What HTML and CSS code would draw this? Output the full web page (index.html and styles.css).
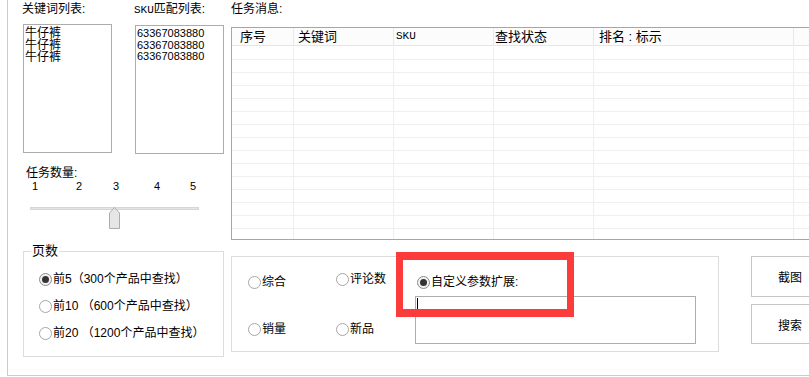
FILE: index.html
```html
<!DOCTYPE html>
<html lang="zh-CN">
<head>
    <meta charset="UTF-8">
    <title>排名查找</title>
    <link rel="stylesheet" href="styles.css">
</head>
<body>
    <div class="window">
        <div class="left-panel">
            <div class="lists">
                <div class="list-col">
                    <p class="caption">关键词列表:</p>
                    <div class="listbox keywords">
                        <div>牛仔裤</div>
                        <div>牛仔裤</div>
                        <div>牛仔裤</div>
                    </div>
                </div>
                <div class="list-col">
                    <p class="caption"><span class="latin">SKU</span>匹配列表:</p>
                    <div class="listbox skus">
                        <div>63367083880</div>
                        <div>63367083880</div>
                        <div>63367083880</div>
                    </div>
                </div>
            </div>

            <div class="task-count">
                <p class="caption">任务数量:</p>
                <div class="ticks">
                    <span>1</span><span>2</span><span>3</span><span>4</span><span>5</span>
                </div>
                <div class="slider">
                    <div class="track"></div>
                    <svg class="thumb" width="11" height="22" viewBox="0 0 11 22">
                        <polygon points="0.5,6 5.5,0.5 10.5,6 10.5,21.5 0.5,21.5" fill="#e6e6e6" stroke="#acacac"/>
                    </svg>
                </div>
            </div>

            <div class="group pages">
                <span class="legend">页数</span>
                <label class="option"><span class="radio on"></span>前5（300个产品中查找）</label>
                <label class="option"><span class="radio"></span>前10 （600个产品中查找）</label>
                <label class="option"><span class="radio"></span>前20 （1200个产品中查找）</label>
            </div>
        </div>

        <div class="right-panel">
            <p class="caption">任务消息:</p>
            <div class="grid">
                <div class="grid-head">
                    <span>序号</span>
                    <span>关键词</span>
                    <span class="latin">SKU</span>
                    <span>查找状态</span>
                    <span>排名 : 标示</span>
                    <span></span>
                </div>
                <div class="grid-body">
                    <div class="row"><span></span><span></span><span></span><span></span><span></span><span></span></div>
                    <div class="row"><span></span><span></span><span></span><span></span><span></span><span></span></div>
                    <div class="row"><span></span><span></span><span></span><span></span><span></span><span></span></div>
                    <div class="row"><span></span><span></span><span></span><span></span><span></span><span></span></div>
                    <div class="row"><span></span><span></span><span></span><span></span><span></span><span></span></div>
                    <div class="row"><span></span><span></span><span></span><span></span><span></span><span></span></div>
                    <div class="row"><span></span><span></span><span></span><span></span><span></span><span></span></div>
                    <div class="row"><span></span><span></span><span></span><span></span><span></span><span></span></div>
                    <div class="row"><span></span><span></span><span></span><span></span><span></span><span></span></div>
                    <div class="row"><span></span><span></span><span></span><span></span><span></span><span></span></div>
                    <div class="row"><span></span><span></span><span></span><span></span><span></span><span></span></div>
                    <div class="row"><span></span><span></span><span></span><span></span><span></span><span></span></div>
                    <div class="row"><span></span><span></span><span></span><span></span><span></span><span></span></div>
                    <div class="row"><span></span><span></span><span></span><span></span><span></span><span></span></div>
                    <div class="row"><span></span><span></span><span></span><span></span><span></span><span></span></div>
                </div>
            </div>

            <div class="bottom">
                <div class="group sort">
                    <label class="option opt-all"><span class="radio"></span>综合</label>
                    <label class="option opt-review"><span class="radio"></span>评论数</label>
                    <label class="option opt-sales"><span class="radio"></span>销量</label>
                    <label class="option opt-new"><span class="radio"></span>新品</label>
                    <div class="custom">
                        <label class="option"><span class="radio on"></span>自定义参数扩展:</label>
                        <div class="textbox"><span class="caret"></span></div>
                    </div>
                    <div class="mark"></div>
                </div>
                <div class="buttons">
                    <button class="btn btn-shot">截图</button>
                    <button class="btn">搜索</button>
                </div>
            </div>
        </div>
    </div>
</body>
</html>
```

FILE: styles.css
```css
* {
    box-sizing: border-box;
}
body {
    margin: 0;
    overflow: hidden;
    background-color: #fff;
    color: #000;
    font: 12px "Liberation Sans", "Noto Sans CJK SC", sans-serif;
}
p {
    margin: 0;
}
.window {
    display: flex;
    width: 840px;
    height: 376px;
    margin-left: 7px;
    border-left: 1px solid #cbcbcb;
    border-bottom: 1px solid #cbcbcb;
}
.caption {
    padding-top: 2px;
    line-height: 14px;
    white-space: nowrap;
}
.latin {
    font-family: "Liberation Mono", monospace;
    font-size: 11px;
}

/* left side */
.left-panel {
    width: 216px;
    flex-shrink: 0;
    padding-left: 15px;
}
.lists {
    display: flex;
    gap: 23px;
}
.list-col > .caption {
    margin-left: -1px;
}
.listbox {
    width: 89px;
    height: 129px;
    margin-top: 8px;
    border: 1px solid #acacac;
    padding: 2px 1px;
    line-height: 11.67px;
}
.listbox.keywords {
    font-size: 12px;
    line-height: 12px;
    padding-top: 2px;
}
.listbox.skus {
    font-size: 11px;
}
.task-count {
    margin-top: 13px;
    padding-left: 3px;
}
.task-count > .caption {
    padding-top: 0;
    line-height: 13px;
}
.ticks {
    display: grid;
    grid-template-columns: 44px 37px 41px 36px auto;
    padding-left: 6px;
    font-size: 11px;
    line-height: 12px;
}
.slider {
    position: relative;
    width: 169px;
    height: 22px;
    margin: 15px 0 0 4px;
}
.track {
    margin-top: 11px;
    height: 3px;
    background-color: #e4e4e4;
    border: 1px solid #d6d6d6;
}
.thumb {
    position: absolute;
    left: 79px;
    top: 0;
}

/* group boxes and radios */
.group {
    position: relative;
    border: 1px solid #dcdcdc;
}
.legend {
    position: absolute;
    top: -8px;
    left: 7px;
    padding: 0 1px;
    background-color: #fff;
    font-size: 13px;
    line-height: 14px;
}
.option {
    display: flex;
    align-items: center;
    gap: 1px;
    height: 13px;
    line-height: 13px;
    white-space: nowrap;
}
.radio {
    position: relative;
    flex-shrink: 0;
    width: 13px;
    height: 13px;
    border: 1px solid #a6a6a6;
    border-radius: 50%;
    background-color: #fff;
}
.radio.on {
    border-color: #8c8c8c;
    background-color: #f2f2f2;
}
.radio.on::after {
    content: "";
    position: absolute;
    left: 2px;
    top: 2px;
    width: 7px;
    height: 7px;
    border-radius: 50%;
    background-color: #333;
}
.pages {
    width: 201px;
    height: 106px;
    margin-top: 22px;
    padding: 21px 0 0 15px;
}
.pages .option + .option {
    margin-top: 14px;
}

/* right side */
.right-panel {
    flex: 1;
    margin-left: 7px;
}
.grid {
    height: 213px;
    margin-top: 11px;
    border: 1px solid #a6a6a6;
    overflow: hidden;
}
.grid-head {
    display: flex;
    height: 18px;
    background-color: #fcfcfc;
    border-bottom: 1px solid #dde7f6;
    font-size: 13px;
    line-height: 17px;
}
.grid-head > span,
.row > span {
    flex-shrink: 0;
    width: 100px;
    border-right: 1px solid #e2eaf7;
    white-space: nowrap;
}
.grid-head > span:nth-child(1) { width: 62px; padding-left: 8px; }
.grid-head > span:nth-child(2) { padding-left: 4px; }
.grid-head > span:nth-child(3) { padding-left: 2px; }
.grid-head > span:nth-child(4) { padding-left: 1px; }
.grid-head > span:nth-child(5) { width: 200px; padding-left: 5px; }
.grid-body {
    padding-top: 1px;
}
.row {
    display: flex;
    height: 13px;
    border-bottom: 1px solid #efefef;
}
.row > span {
    border-right-color: #efefef;
}
.row > span:nth-child(1) { width: 62px; }
.row > span:nth-child(5) { width: 200px; }

.bottom {
    display: flex;
    align-items: flex-start;
    margin-top: 16px;
}
.sort {
    display: grid;
    grid-template-columns: 88px 79px 1fr;
    grid-template-rows: 50px 13px;
    width: 488px;
    height: 96px;
    padding: 16px 0 0 16px;
}
.opt-all { grid-area: 1 / 1; margin-top: 3px; }
.opt-review { grid-area: 1 / 2; }
.opt-sales { grid-area: 2 / 1; }
.opt-new { grid-area: 2 / 2; }
.custom {
    grid-area: 1 / 3 / 3 / 4;
    margin-top: 3px;
}
.custom > .option {
    margin-left: 2px;
}
.textbox {
    width: 281px;
    height: 48px;
    margin-top: 7px;
    border: 1px solid #adadad;
    background-color: #fff;
}
.caret {
    display: block;
    width: 1px;
    height: 13px;
    margin: 1px 0 0 1px;
    background-color: #000;
}
.mark {
    position: absolute;
    left: 164px;
    top: -5px;
    width: 178px;
    height: 65px;
    border-style: solid;
    border-color: #fc3b3b;
    border-width: 8px 7px;
}
.buttons {
    display: flex;
    flex-direction: column;
    gap: 7px;
    margin-left: 32px;
}
.btn {
    width: 78px;
    height: 40px;
    padding: 0;
    border: 1px solid #c6c6c6;
    background-color: #fff;
    color: #000;
    font: inherit;
}
.btn-shot {
    height: 41px;
}
```
